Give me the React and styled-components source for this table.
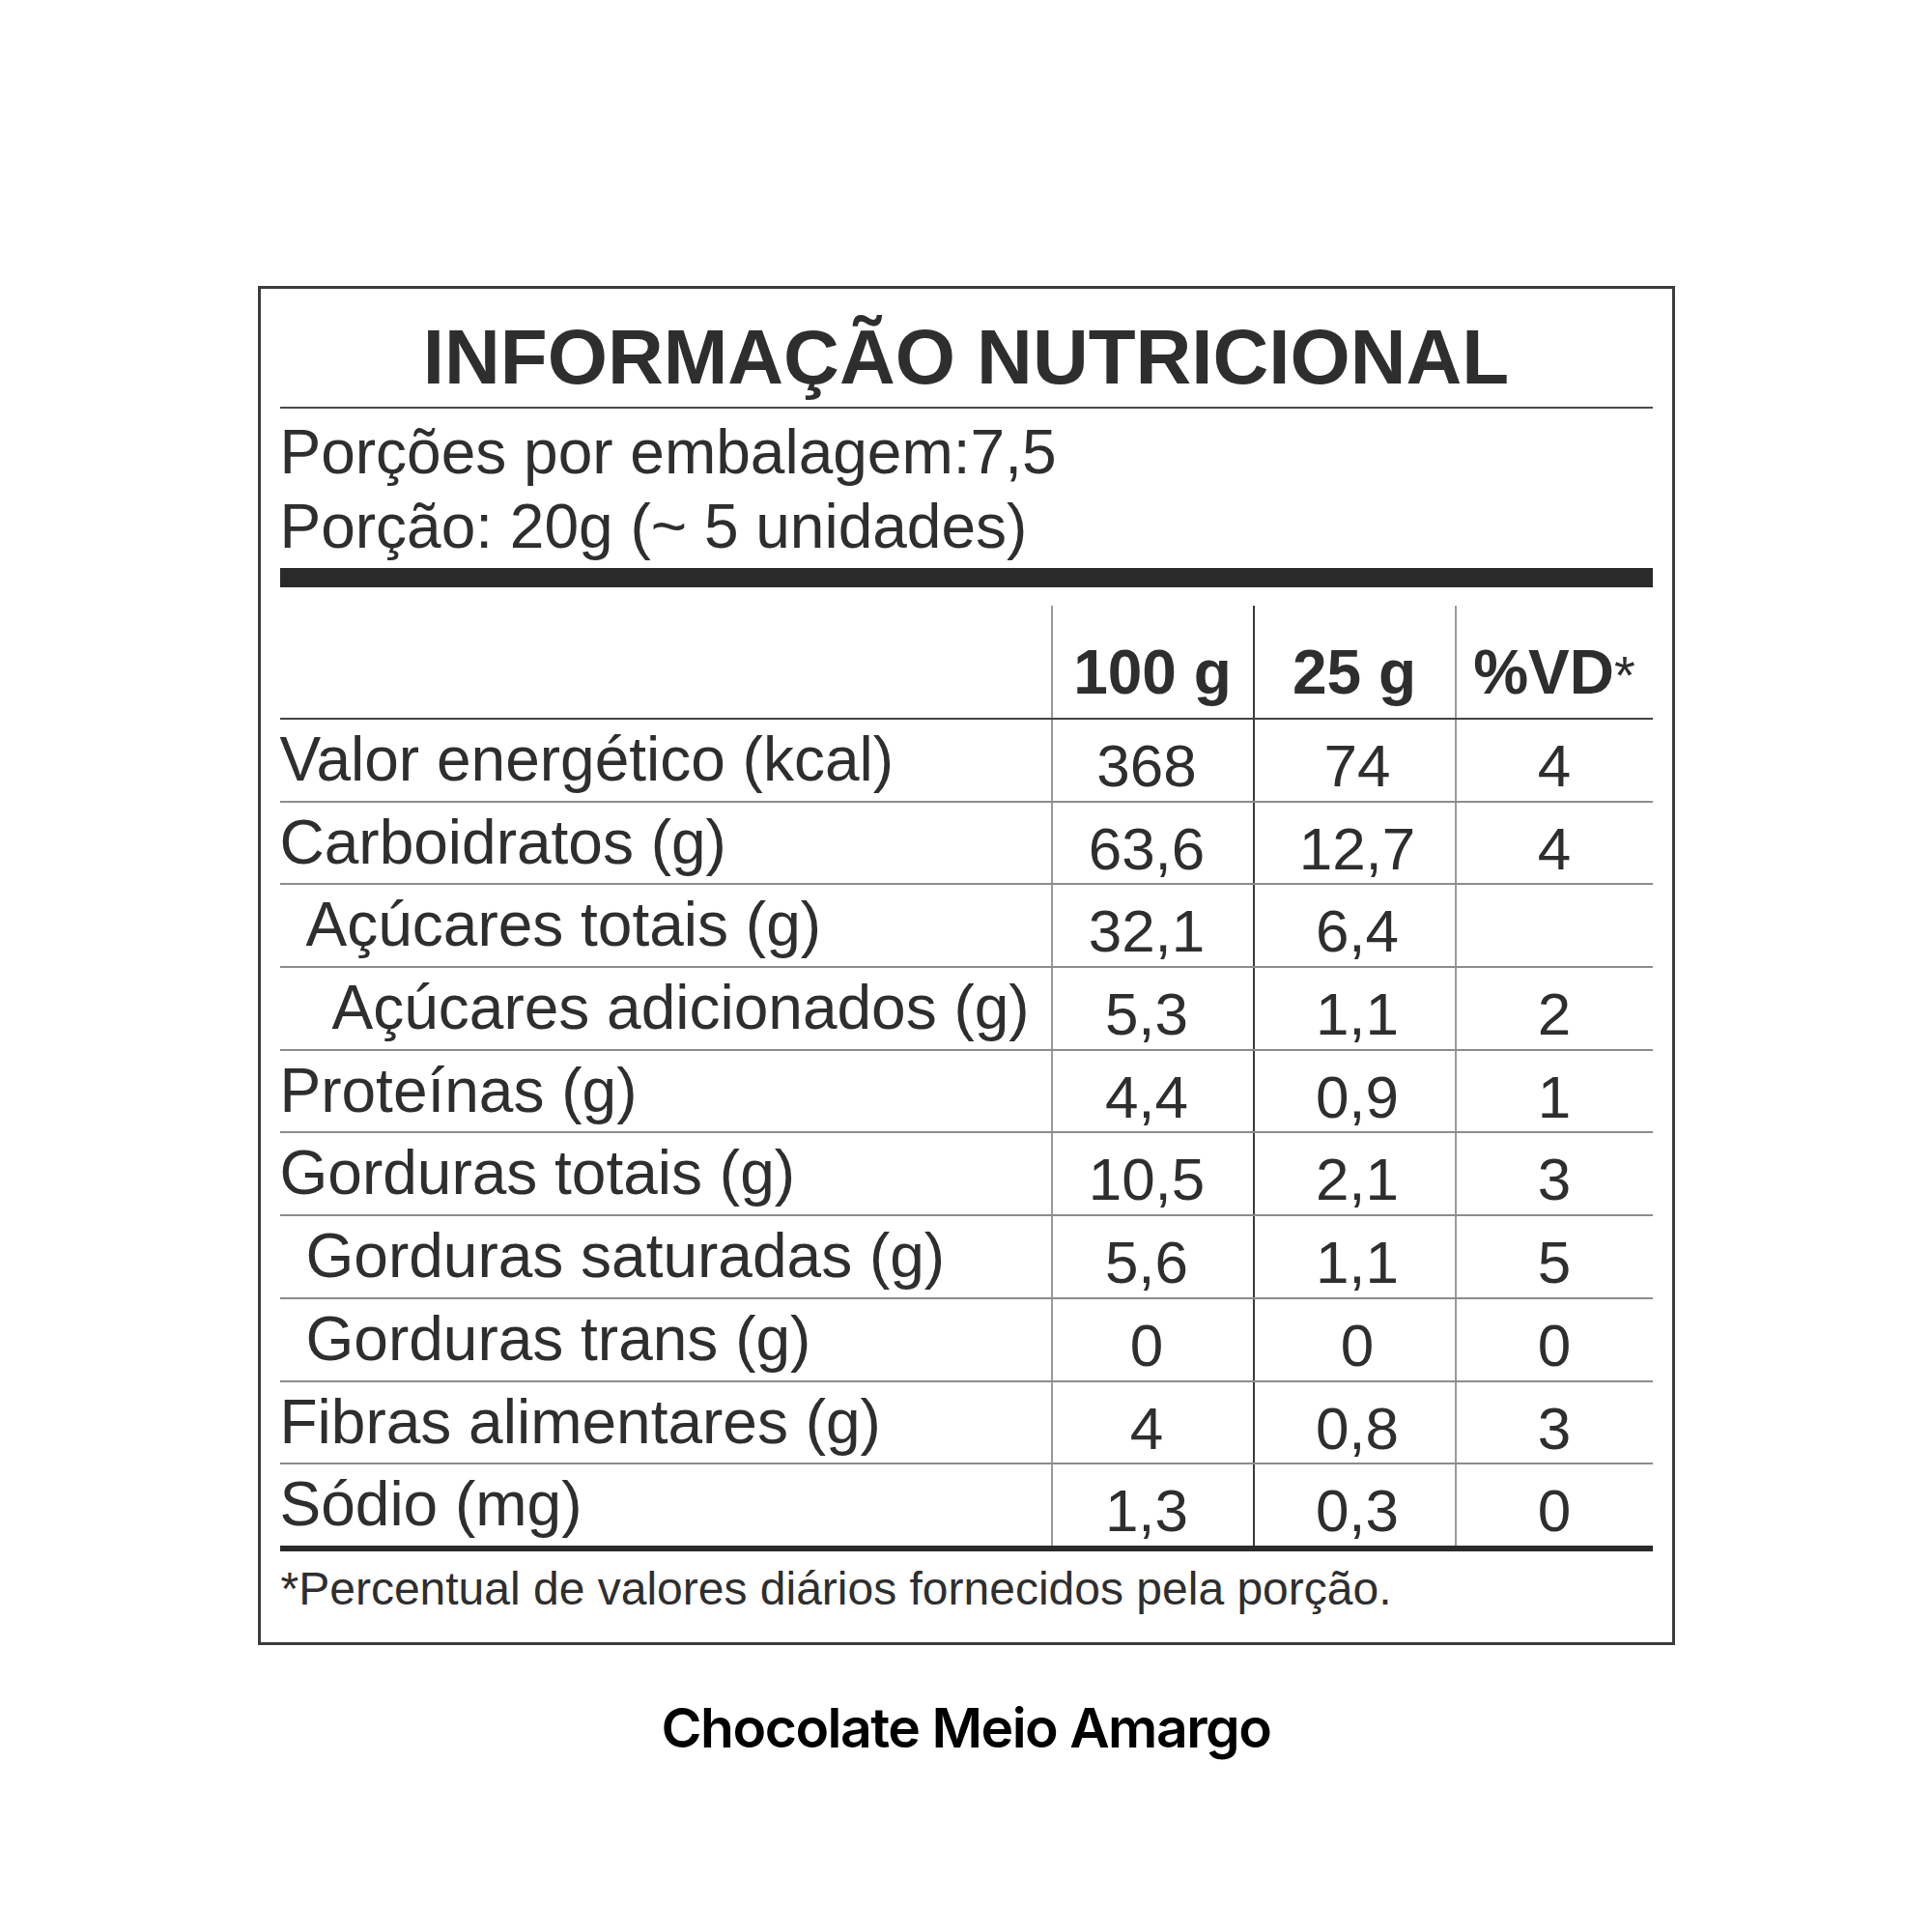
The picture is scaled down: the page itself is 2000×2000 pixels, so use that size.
import React from "react"
import styled, { createGlobalStyle } from "styled-components"

const GlobalStyle = createGlobalStyle`
    html, body {
        margin: 0;
        padding: 0;
        background: #ffffff;
    }
    * {
        box-sizing: border-box;
    }
`

const rows = [
    { label: "Valor energético (kcal)", level: 0, values: ["368", "74", "4"] },
    { label: "Carboidratos (g)", level: 0, values: ["63,6", "12,7", "4"] },
    { label: "Açúcares totais (g)", level: 1, values: ["32,1", "6,4", ""] },
    { label: "Açúcares adicionados (g)", level: 2, values: ["5,3", "1,1", "2"] },
    { label: "Proteínas (g)", level: 0, values: ["4,4", "0,9", "1"] },
    { label: "Gorduras totais (g)", level: 0, values: ["10,5", "2,1", "3"] },
    { label: "Gorduras saturadas (g)", level: 1, values: ["5,6", "1,1", "5"] },
    { label: "Gorduras trans (g)", level: 1, values: ["0", "0", "0"] },
    { label: "Fibras alimentares (g)", level: 0, values: ["4", "0,8", "3"] },
    { label: "Sódio (mg)", level: 0, values: ["1,3", "0,3", "0"] },
]

// first and last value columns have a lighter rule than the middle one
const lineColors = ["#9a9a9a", "#3a3a3a", "#9a9a9a"]
// nudge values off centre (positive = left, negative = right)
const valueShift = [12, -6, 0]

export default function App() {
    return (
        <>
            <GlobalStyle />
            <Page>
                <Label>
                    <Title>INFORMAÇÃO NUTRICIONAL</Title>
                    <Serving>
                        <div>Porções por embalagem:7,5</div>
                        <div>Porção: 20g (~ 5 unidades)</div>
                    </Serving>
                    <ThickBar />
                    <Table>
                        <HeaderRow>
                            <HeadCell />
                            <HeadCell $line={lineColors[0]}>100 g</HeadCell>
                            <HeadCell $line={lineColors[1]}>25 g</HeadCell>
                            <HeadCell $line={lineColors[2]}>%VD<Star>*</Star></HeadCell>
                        </HeaderRow>
                        {rows.map((row, i) => (
                            <Row key={row.label} $first={i === 0}>
                                <LabelCell $level={row.level}>{row.label}</LabelCell>
                                {row.values.map((v, j) => (
                                    <ValueCell key={j} $line={lineColors[j]} $shift={valueShift[j]}>{v}</ValueCell>
                                ))}
                            </Row>
                        ))}
                    </Table>
                    <Footnote>*Percentual de valores diários fornecidos pela porção.</Footnote>
                </Label>
                <Caption>Chocolate Meio Amargo</Caption>
            </Page>
        </>
    )
}

const Page = styled.div`
    width: 2000px;
    min-height: 2000px;
    padding-top: 296px;
    display: flex;
    flex-direction: column;
    align-items: center;
`

const Label = styled.div`
    width: 1467px;
    border: 3px solid #3c3c3c;
    padding: 0 20px 32px 20px;
    font-family: "Liberation Sans", Arial, sans-serif;
    color: #2e2e2e;
    background: #ffffff;
`

const Title = styled.h1`
    margin: 0;
    padding-top: 31px;
    padding-bottom: 11px;
    font-size: 80px;
    line-height: 80px;
    font-weight: 700;
    text-align: center;
    border-bottom: 2px solid #4a4a4a;
`

const Serving = styled.div`
    padding-top: 7px;
    font-size: 64px;
    line-height: 77px;
    margin-bottom: 4px;
`

const ThickBar = styled.div`
    height: 20px;
    background: #2a2a2a;
`

const Table = styled.div`
    margin-top: 19px;
    border-bottom: 6px solid #2a2a2a;
`

const columns = "798px 209px 209px 205px"

const HeaderRow = styled.div`
    display: grid;
    grid-template-columns: ${columns};
    height: 116px;
`

const HeadCell = styled.div`
    border-left: ${p => (p.$line ? `2px solid ${p.$line}` : "none")};
    padding-top: 37px;
    font-size: 64px;
    line-height: 64px;
    font-weight: 700;
    text-align: center;
    white-space: nowrap;
`

const Star = styled.span`
    font-weight: 400;
    font-size: 56px;
`

const Row = styled.div`
    display: grid;
    grid-template-columns: ${columns};
    height: 85.7px;
    border-top: ${p => (p.$first ? "2px solid #444444" : "2.5px solid #8c8c8c")};
`

const LabelCell = styled.div`
    padding-top: 9px;
    padding-left: ${p => p.$level * 27}px;
    font-size: 64px;
    line-height: 64px;
    white-space: nowrap;
`

const ValueCell = styled.div`
    border-left: 2px solid ${p => p.$line};
    padding-top: 17px;
    padding-right: ${p => Math.max(p.$shift, 0)}px;
    padding-left: ${p => Math.max(-p.$shift, 0)}px;
    font-size: 62px;
    line-height: 62px;
    text-align: center;
`

const Footnote = styled.div`
    margin-top: 15px;
    padding-left: 1px;
    font-size: 48px;
    line-height: 47px;
`

const Caption = styled.div`
    margin-top: 57px;
    font-family: Inter, "Noto Sans", sans-serif;
    font-weight: 600;
    font-size: 57px;
    line-height: 57px;
    letter-spacing: -1.5px;
    color: #000000;
`
